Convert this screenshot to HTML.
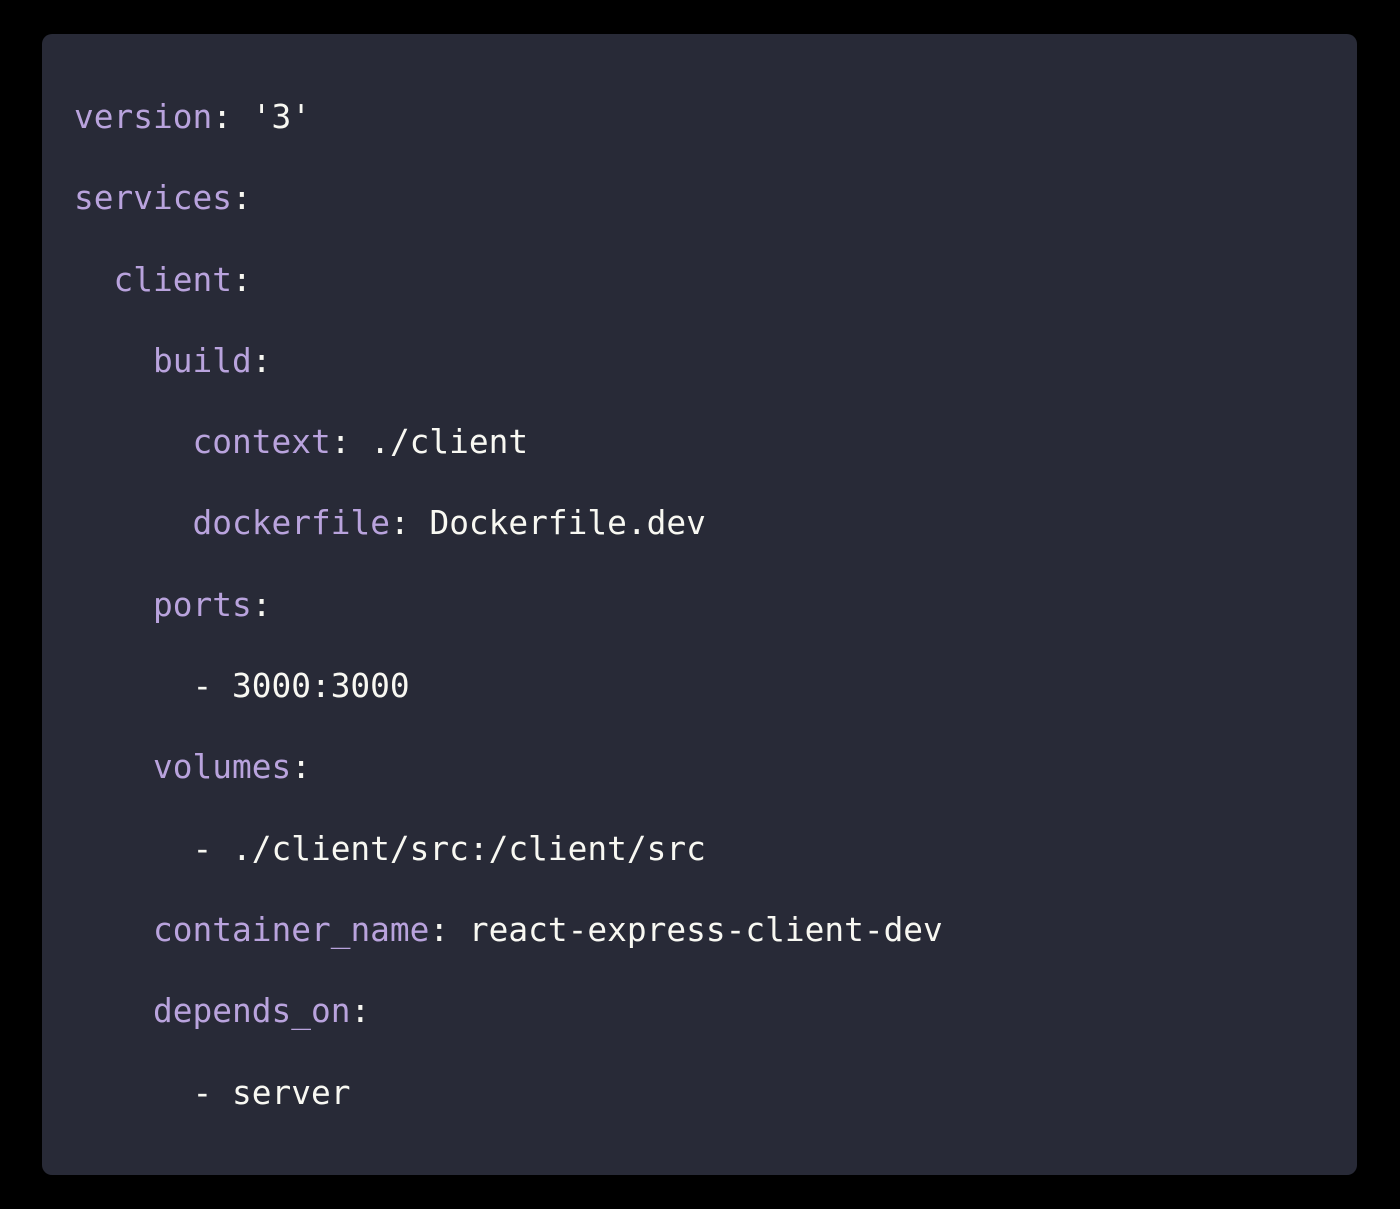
<!DOCTYPE html>
<html><head><style>
html,body{margin:0;padding:0;background:#000;width:1400px;height:1209px;overflow:hidden}
.card{position:absolute;left:42px;top:34px;width:1315px;height:1141px;background:#282a37;border-radius:10px}
pre{margin:0;position:absolute;left:32px;top:43px;font-family:"DejaVu Sans Mono","Liberation Mono",monospace;font-size:32.8px;line-height:81.3px;color:#f8f8f2}
.k{color:#b9a3dd}
</style></head><body>
<div class="card"><pre><span class="k">version</span>: '3'
<span class="k">services</span>:
  <span class="k">client</span>:
    <span class="k">build</span>:
      <span class="k">context</span>: ./client
      <span class="k">dockerfile</span>: Dockerfile.dev
    <span class="k">ports</span>:
      - 3000:3000
    <span class="k">volumes</span>:
      - ./client/src:/client/src
    <span class="k">container_name</span>: react-express-client-dev
    <span class="k">depends_on</span>:
      - server</pre></div>
</body></html>
